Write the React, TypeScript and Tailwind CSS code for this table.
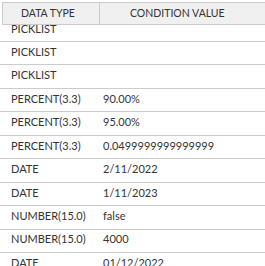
const rows: { type: string; value: string }[] = [
  { type: "PICKLIST", value: "" },
  { type: "PICKLIST", value: "" },
  { type: "PICKLIST", value: "" },
  { type: "PERCENT(3.3)", value: "90.00%" },
  { type: "PERCENT(3.3)", value: "95.00%" },
  { type: "PERCENT(3.3)", value: "0.0499999999999999" },
  { type: "DATE", value: "2/11/2022" },
  { type: "DATE", value: "1/11/2023" },
  { type: "NUMBER(15.0)", value: "false" },
  { type: "NUMBER(15.0)", value: "4000" },
  { type: "DATE", value: "01/12/2022" },
];

export default function App() {
  return (
    <div
      className="w-[265px] h-[266px] overflow-hidden bg-white text-[#333] text-[11px]"
      style={{ fontFamily: "Lato, 'Liberation Sans', sans-serif" }}
    >
      {/* header */}
      <div className="ml-[2px] mt-[2px] flex h-[23px] border-t border-l border-b border-[#cbcbcb] bg-[#f0f0f0] text-[10.5px]">
        <div className="w-[97px] shrink-0 border-r border-[#cbcbcb] flex items-center pl-[18px]">
          DATA TYPE
        </div>
        <div className="flex-1 flex items-center pl-[30px]">CONDITION VALUE</div>
      </div>

      {/* body, scrolled a bit */}
      <div className="h-[241px] overflow-hidden">
        <div className="-mt-[6.44px]">
          {rows.map((r, i) => (
            <div
              key={i}
              className="flex h-[23.44px] border-b border-[#cbcbcb] items-center pb-[2px]"
            >
              <div className="w-[92px] shrink-0 pl-[11px]">{r.type}</div>
              <div className="flex-1 pl-[11px]">{r.value}</div>
            </div>
          ))}
        </div>
      </div>
    </div>
  );
}
